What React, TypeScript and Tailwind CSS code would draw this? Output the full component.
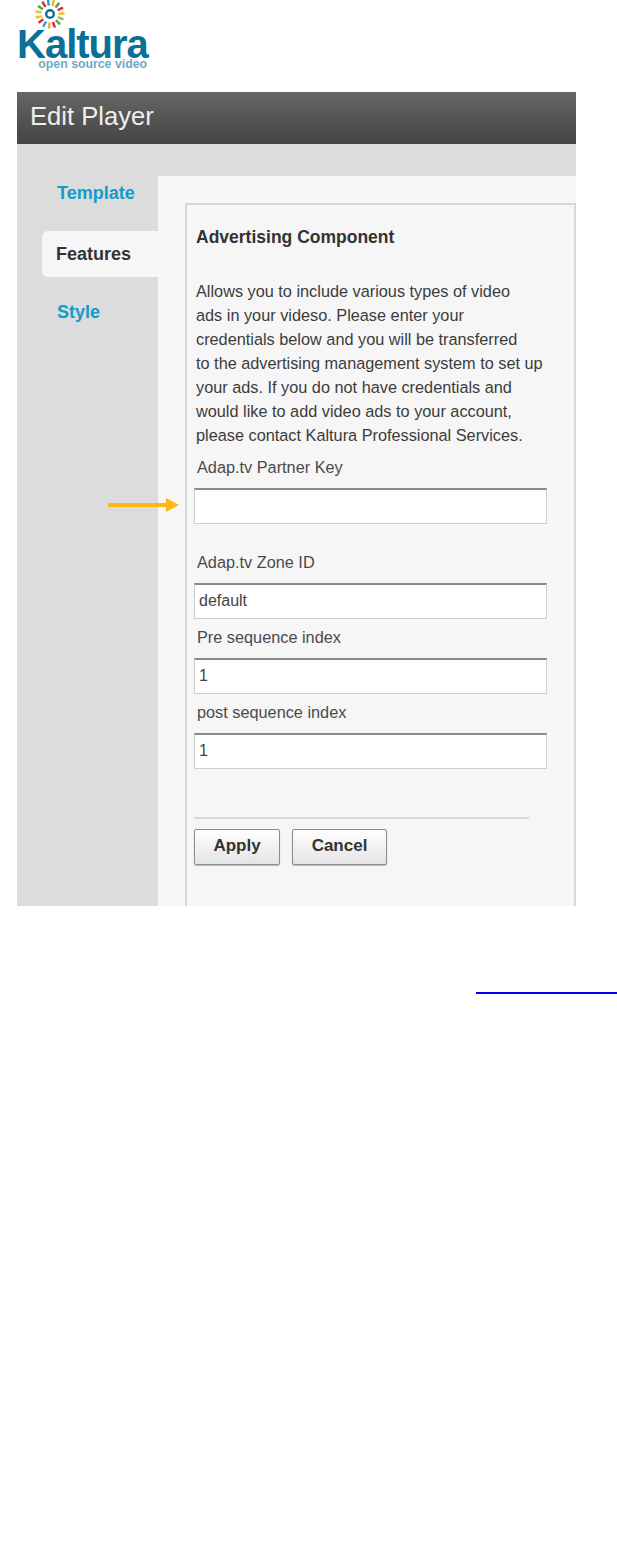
import React from "react";

const sans = { fontFamily: '"Liberation Sans", Arial, sans-serif' };

const rays = [
  { a: -8, c: "#1f9ed1" },
  { a: 16, c: "#f2b01e" },
  { a: 40, c: "#4aa84a" },
  { a: 64, c: "#e0263c" },
  { a: 88, c: "#f2c21e" },
  { a: 112, c: "#8cc152" },
  { a: 136, c: "#4aa84a" },
  { a: 160, c: "#e0263c" },
  { a: 184, c: "#f2b01e" },
  { a: 208, c: "#1f9ed1" },
  { a: 232, c: "#e0263c" },
  { a: 256, c: "#f2c21e" },
  { a: 280, c: "#f2c21e" },
  { a: 304, c: "#4aa84a" },
  { a: 328, c: "#e0263c" },
];

const Sun = () => (
  <svg width="34" height="30" viewBox="0 0 34 30" aria-hidden="true">
    {rays.map((ray) => (
      <line
        key={ray.a}
        x1="17"
        y1="5.5"
        x2="17"
        y2="-0.5"
        transform={`rotate(${ray.a} 17 14)`}
        stroke={ray.c}
        strokeWidth="2.4"
      />
    ))}
    <circle cx="17" cy="14" r="3.8" fill="none" stroke="#0b7097" strokeWidth="2.4" />
  </svg>
);

const Field = ({ label, value, labelClass }: { label: string; value?: string; labelClass: string }) => (
  <div>
    <div className={`pl-[3px] text-[16.3px] leading-[20px] text-[#4a4a4a] ${labelClass}`}>{label}</div>
    <div className="h-[36px] w-[353px] border border-[#c9cfcc] border-t-2 border-t-[#8a8a8a] bg-white pl-[4px] text-[16px] leading-[31px] text-[#444]">
      {value}
    </div>
  </div>
);

const Button = ({ label, width }: { label: string; width: string }) => (
  <button
    className={`h-[36px] ${width} rounded-[2px] border border-[#8c8c8c] bg-gradient-to-b from-white to-[#e4e4e4] pb-[3px] text-[17px] font-bold text-[#333] shadow-[0_1px_1px_#bbb]`}
  >
    {label}
  </button>
);

export default function App() {
  return (
    <div className="relative min-h-[1549px] w-[617px] overflow-hidden bg-white" style={sans}>
      {/* Logo */}
      <div className="flex h-[92px] flex-col pl-[17px]">
        <div className="w-[130px]">
          <div className="h-[29px] pl-[16px]">
            <Sun />
          </div>
          <div className="h-[29px] text-[40px] font-bold leading-[30px] tracking-[-1px] text-[#0b7097]">Kaltura</div>
          <div className="text-right text-[12.3px] font-bold leading-[12px] text-[#6fa9c5]">open source video</div>
        </div>
      </div>

      {/* Panel */}
      <div className="h-[814px] w-[559px] ml-[17px] bg-[#dcdcdc]">
        <div className="flex h-[52px] items-center bg-gradient-to-b from-[#666766] to-[#434443] pb-[3px] pl-[13px] text-[25.6px] text-[#efefef]">
          Edit Player
        </div>
        <div className="flex h-[762px] pt-[32px]">
          {/* Tabs */}
          <div className="flex w-[141px] flex-col pl-[25px] text-[18px] font-bold">
            <div className="flex h-[55px] items-start pl-[15px] pt-[4px] text-[#119ccd]">Template</div>
            <div className="flex h-[46px] items-center rounded-l-[6px] bg-[#f6f6f6] pl-[14px] text-[#333]">Features</div>
            <div className="flex h-[58px] items-center pl-[15px] pt-[12px] text-[#119ccd]">Style</div>
          </div>

          {/* Content */}
          <div className="relative flex-1 bg-[#f6f6f6] pl-[27px] pt-[27px]">
            <div className="h-[703px] border-2 border-b-0 border-[#d3d9d6] pl-[7px]">
              <div className="pl-[2px] pt-[22px] text-[17.5px] font-bold leading-[20px] text-[#333]">Advertising Component</div>
              <p className="mt-[32px] w-[370px] pl-[2px] text-[16.3px] leading-[24px] text-[#3c3c3c]">
                Allows you to include various types of video
                <br />
                ads in your videso. Please enter your
                <br />
                credentials below and you will be transferred
                <br />
                to the advertising management system to set up
                <br />
                your ads. If you do not have credentials and
                <br />
                would like to add video ads to your account,
                <br />
                please contact Kaltura Professional Services.
              </p>
              <div className="mt-[10px]">
                <Field label="Adap.tv Partner Key" labelClass="mb-[11px]" />
              </div>
              <div className="mt-[28px]">
                <Field label="Adap.tv Zone ID" value="default" labelClass="mb-[11px]" />
              </div>
              <div className="mt-[8px]">
                <Field label="Pre sequence index" value="1" labelClass="mb-[11px]" />
              </div>
              <div className="mt-[8px]">
                <Field label="post sequence index" value="1" labelClass="mb-[11px]" />
              </div>
              <div className="mt-[48px] h-[2px] w-[335px] bg-[#d3d9d6]" />
              <div className="mt-[10px] flex gap-[12px]">
                <Button label="Apply" width="w-[86px]" />
                <Button label="Cancel" width="w-[95px]" />
              </div>
            </div>

            {/* Arrow pointing at the partner key input */}
            <svg className="absolute left-[-50px] top-[321px]" width="72" height="16" viewBox="0 0 72 16" aria-hidden="true">
              <rect x="0" y="6" width="60" height="4" fill="#fdb913" />
              <path d="M58 1 L71 8 L58 15 Z" fill="#fdb913" />
            </svg>
          </div>
        </div>
      </div>

      {/* Link underline cut off at the page edge */}
      <div className="ml-[476px] mt-[86px] h-[2px] w-[141px] bg-[#0000ee]" />
    </div>
  );
}
